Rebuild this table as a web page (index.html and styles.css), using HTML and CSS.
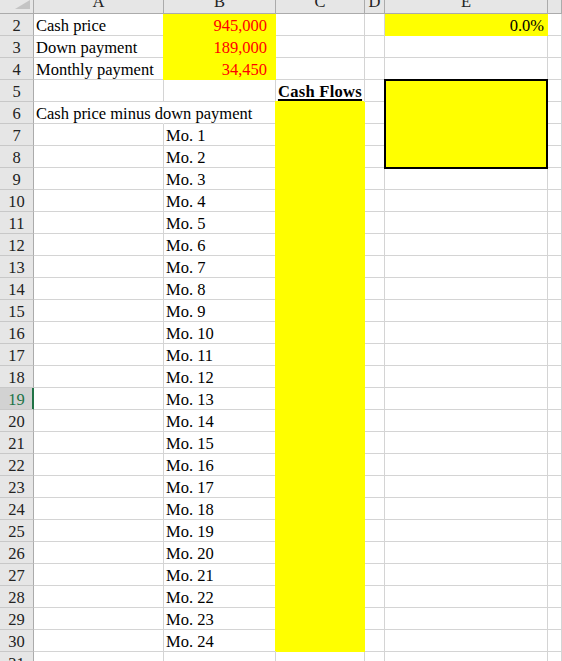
FILE: index.html
```html
<!DOCTYPE html>
<html>
<head>
<meta charset="utf-8">
<link rel="stylesheet" href="styles.css">
</head>
<body>
<div class="sheet">
  <div class="hd corner"><svg class="tri" width="33" height="13" viewBox="0 0 33 13"><polygon points="15,9 30,9 30,0" fill="#c4c4c4"/></svg></div>
  <div class="hd"><span>A</span></div>
  <div class="hd"><span>B</span></div>
  <div class="hd"><span>C</span></div>
  <div class="hd"><span>D</span></div>
  <div class="hd"><span>E</span></div>
  <div class="hd"></div>

  <div class="rh">2</div><div class="c">Cash price</div><div class="c y yl num">945,000</div><div class="c"></div><div class="c"></div><div class="c y pct">0.0%</div><div class="c"></div>
  <div class="rh">3</div><div class="c">Down payment</div><div class="c y yl num">189,000</div><div class="c"></div><div class="c"></div><div class="c"></div><div class="c"></div>
  <div class="rh">4</div><div class="c">Monthly payment</div><div class="c y yl num">34,450</div><div class="c"></div><div class="c"></div><div class="c"></div><div class="c"></div>
  <div class="rh">5</div><div class="c"></div><div class="c"></div><div class="c title"><span>Cash Flows</span></div><div class="c"></div><div class="box"></div><div class="c"></div>
  <div class="rh">6</div><div class="c ov">Cash price minus down payment</div><div class="c"></div><div class="c y yc"></div><div class="c"></div><div class="c"></div>
  <div class="rh">7</div><div class="c"></div><div class="c">Mo. 1</div><div class="c y yc"></div><div class="c"></div><div class="c"></div>
  <div class="rh">8</div><div class="c"></div><div class="c">Mo. 2</div><div class="c y yc"></div><div class="c"></div><div class="c"></div>
  <div class="rh">9</div><div class="c"></div><div class="c">Mo. 3</div><div class="c y yc"></div><div class="c"></div><div class="c"></div><div class="c"></div>
  <div class="rh">10</div><div class="c"></div><div class="c">Mo. 4</div><div class="c y yc"></div><div class="c"></div><div class="c"></div><div class="c"></div>
  <div class="rh">11</div><div class="c"></div><div class="c">Mo. 5</div><div class="c y yc"></div><div class="c"></div><div class="c"></div><div class="c"></div>
  <div class="rh">12</div><div class="c"></div><div class="c">Mo. 6</div><div class="c y yc"></div><div class="c"></div><div class="c"></div><div class="c"></div>
  <div class="rh">13</div><div class="c"></div><div class="c">Mo. 7</div><div class="c y yc"></div><div class="c"></div><div class="c"></div><div class="c"></div>
  <div class="rh">14</div><div class="c"></div><div class="c">Mo. 8</div><div class="c y yc"></div><div class="c"></div><div class="c"></div><div class="c"></div>
  <div class="rh">15</div><div class="c"></div><div class="c">Mo. 9</div><div class="c y yc"></div><div class="c"></div><div class="c"></div><div class="c"></div>
  <div class="rh">16</div><div class="c"></div><div class="c">Mo. 10</div><div class="c y yc"></div><div class="c"></div><div class="c"></div><div class="c"></div>
  <div class="rh">17</div><div class="c"></div><div class="c">Mo. 11</div><div class="c y yc"></div><div class="c"></div><div class="c"></div><div class="c"></div>
  <div class="rh">18</div><div class="c"></div><div class="c">Mo. 12</div><div class="c y yc"></div><div class="c"></div><div class="c"></div><div class="c"></div>
  <div class="rh sel">19</div><div class="c"></div><div class="c">Mo. 13</div><div class="c y yc"></div><div class="c"></div><div class="c"></div><div class="c"></div>
  <div class="rh">20</div><div class="c"></div><div class="c">Mo. 14</div><div class="c y yc"></div><div class="c"></div><div class="c"></div><div class="c"></div>
  <div class="rh">21</div><div class="c"></div><div class="c">Mo. 15</div><div class="c y yc"></div><div class="c"></div><div class="c"></div><div class="c"></div>
  <div class="rh">22</div><div class="c"></div><div class="c">Mo. 16</div><div class="c y yc"></div><div class="c"></div><div class="c"></div><div class="c"></div>
  <div class="rh">23</div><div class="c"></div><div class="c">Mo. 17</div><div class="c y yc"></div><div class="c"></div><div class="c"></div><div class="c"></div>
  <div class="rh">24</div><div class="c"></div><div class="c">Mo. 18</div><div class="c y yc"></div><div class="c"></div><div class="c"></div><div class="c"></div>
  <div class="rh">25</div><div class="c"></div><div class="c">Mo. 19</div><div class="c y yc"></div><div class="c"></div><div class="c"></div><div class="c"></div>
  <div class="rh">26</div><div class="c"></div><div class="c">Mo. 20</div><div class="c y yc"></div><div class="c"></div><div class="c"></div><div class="c"></div>
  <div class="rh">27</div><div class="c"></div><div class="c">Mo. 21</div><div class="c y yc"></div><div class="c"></div><div class="c"></div><div class="c"></div>
  <div class="rh">28</div><div class="c"></div><div class="c">Mo. 22</div><div class="c y yc"></div><div class="c"></div><div class="c"></div><div class="c"></div>
  <div class="rh">29</div><div class="c"></div><div class="c">Mo. 23</div><div class="c y yc"></div><div class="c"></div><div class="c"></div><div class="c"></div>
  <div class="rh">30</div><div class="c"></div><div class="c">Mo. 24</div><div class="c y yc"></div><div class="c"></div><div class="c"></div><div class="c"></div>
  <div class="rh">31</div><div class="c"></div><div class="c"></div><div class="c"></div><div class="c"></div><div class="c"></div><div class="c"></div>
</div>
</body>
</html>
```
FILE: styles.css
```css
* { box-sizing: border-box; }
html, body { margin: 0; padding: 0; overflow: hidden; background: #fff; }
body {
  font-family: "Liberation Serif", "Times New Roman", serif;
  font-size: 16.5px;
  color: #000;
}
.sheet {
  display: grid;
  grid-template-columns: 34px 130px 112px 89px 20px 163px 1fr;
  grid-template-rows: 14px;
  grid-auto-rows: 22px;
  width: 562px;
  background: #fff;
}
.hd {
  background: #e6e6e6;
  border-right: 1px solid #ababab;
  border-bottom: 1px solid #ababab;
  overflow: hidden;
  text-align: center;
  color: #222;
}
.hd span { display: block; margin-top: -9px; line-height: 22px; }
.corner { display: flex; }
.tri { display: block; }
.rh {
  background: #e6e6e6;
  border-right: 1px solid #ababab;
  border-bottom: 1px solid #c8c8c8;
  text-align: center;
  line-height: 24px;
  color: #222;
}
.rh.sel {
  background: #d2d2d2;
  color: #217346;
  border-right-color: #217346;
  box-shadow: inset -1px 0 0 #217346;
}
.c {
  border-right: 1px solid #d4d4d4;
  border-bottom: 1px solid #d4d4d4;
  padding: 0 2px;
  line-height: 24px;
  white-space: nowrap;
}
.ov { border-right-color: transparent; }
.y { background: #ff0; border-color: #ff0; }
.yl { box-shadow: -1px 0 0 #ff0; }
.yc { box-shadow: -1px -1px 0 #ff0; }
.num { text-align: right; color: #f00; padding-right: 8px; }
.pct { text-align: right; padding-right: 3px; }
.title { text-align: center; padding: 0; font-weight: bold; letter-spacing: 0.3px; }
.title span {
  text-decoration: underline;
  text-decoration-thickness: 2px;
  text-underline-offset: 2px;
}
.box {
  grid-row: span 4;
  background: #ff0;
  border: 2px solid #000;
  margin: -1px 0 -1px -1px;
  z-index: 1;
}
```
